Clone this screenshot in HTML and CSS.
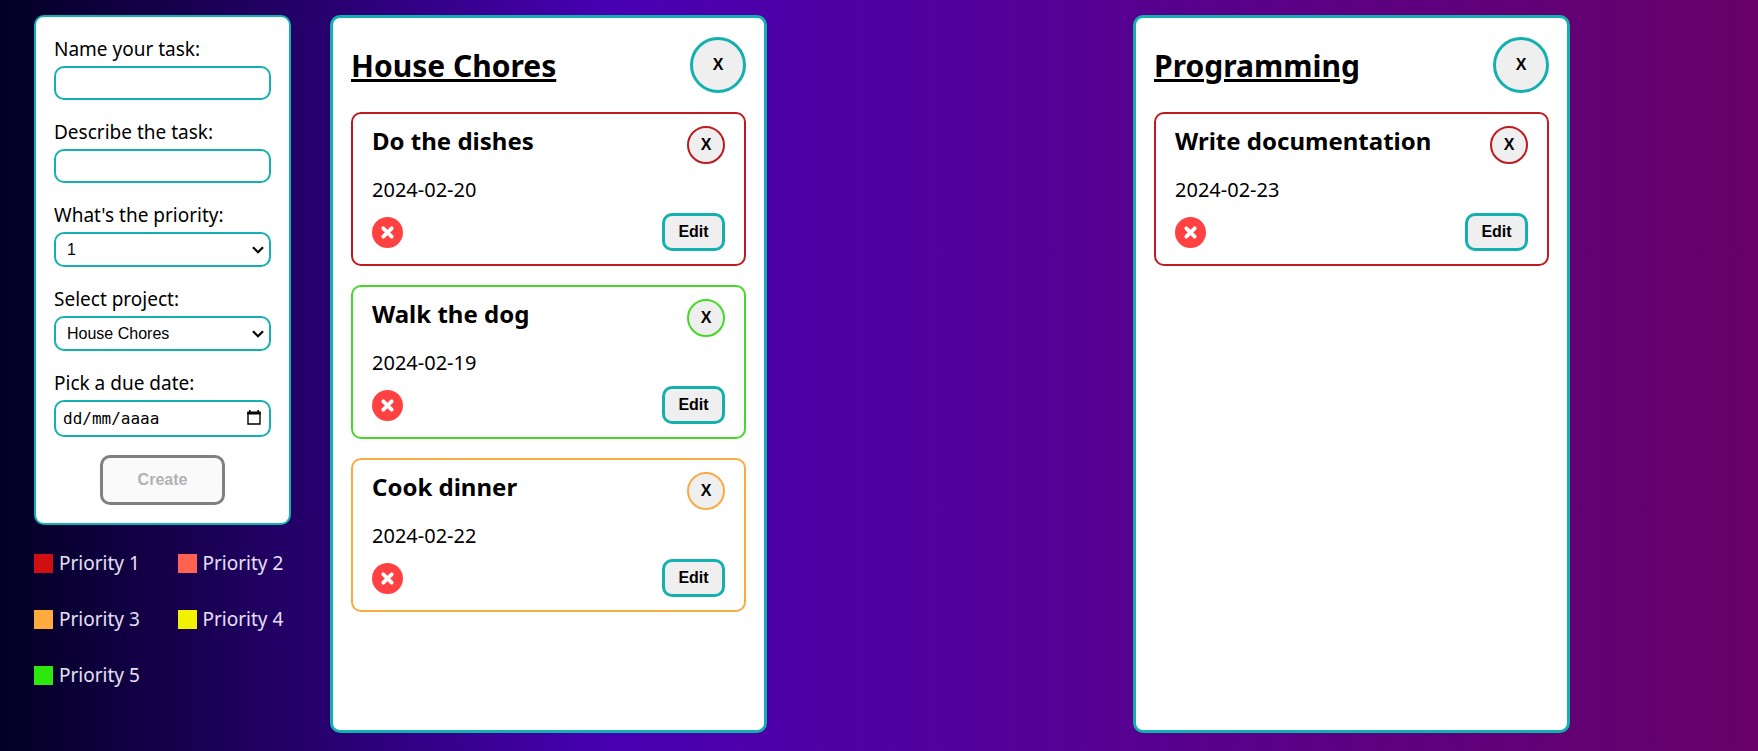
FILE: index.html
```html
<!DOCTYPE html>
<html lang="en">
<head>
<meta charset="utf-8">
<meta name="viewport" content="width=device-width, initial-scale=1">
<title>To-do list</title>
<link rel="stylesheet" href="styles.css">
</head>
<body>
<svg class="sprite" aria-hidden="true">
  <symbol id="not-done" viewBox="0 0 31 31">
    <circle cx="15.5" cy="15.5" r="15.5" fill="#ff4141"/>
    <path d="M11.3 11.3l8.4 8.4M19.7 11.3l-8.4 8.4" stroke="#fff" stroke-width="3.8" stroke-linecap="round"/>
  </symbol>
</svg>
<aside class="sidebar">
  <form class="task-form">
    <div class="field">
      <label for="task-name">Name your task:</label>
      <input id="task-name" class="control" type="text">
    </div>
    <div class="field">
      <label for="task-desc">Describe the task:</label>
      <input id="task-desc" class="control" type="text">
    </div>
    <div class="field">
      <label for="task-priority">What's the priority:</label>
      <div class="picker">
        <select id="task-priority" class="control control-select"><option>1</option><option>2</option><option>3</option><option>4</option><option>5</option></select>
        <svg class="chevron" viewBox="0 0 12 8" aria-hidden="true"><path d="M1 1.2l5 5 5-5" fill="none" stroke="#000" stroke-width="2.2"/></svg>
      </div>
    </div>
    <div class="field">
      <label for="task-project">Select project:</label>
      <div class="picker">
        <select id="task-project" class="control control-select"><option>House Chores</option><option>Programming</option></select>
        <svg class="chevron" viewBox="0 0 12 8" aria-hidden="true"><path d="M1 1.2l5 5 5-5" fill="none" stroke="#000" stroke-width="2.2"/></svg>
      </div>
    </div>
    <div class="field">
      <label for="task-date">Pick a due date:</label>
      <div class="picker">
        <input id="task-date" class="control control-date" type="text" placeholder="dd/mm/aaaa">
        <button class="calendar" type="button" aria-label="Open calendar"><svg viewBox="0 0 14 15"><path d="M1 3h12v11H1z" fill="none" stroke="#000" stroke-width="1.4"/><path d="M0.3 1.5h13.4V4.6H0.3zM2 0h1.6v2H2zM10.4 0h1.6v2h-1.6z"/></svg></button>
      </div>
    </div>
    <button class="create" type="submit" disabled>Create</button>
  </form>
  <ul class="legend">
    <li><span class="swatch p1"></span>Priority 1</li>
    <li><span class="swatch p2"></span>Priority 2</li>
    <li><span class="swatch p3"></span>Priority 3</li>
    <li><span class="swatch p4"></span>Priority 4</li>
    <li><span class="swatch p5"></span>Priority 5</li>
  </ul>
</aside>
<main class="board">
  <section class="project">
    <header class="project-head">
      <h1>House Chores</h1>
      <button class="round round-large" type="button">X</button>
    </header>
    <article class="task p1">
      <div class="row"><h2>Do the dishes</h2><button class="round" type="button">X</button></div>
      <p class="date">2024-02-20</p>
      <div class="row row-end"><svg class="status"><use href="#not-done"/></svg><button class="edit" type="button">Edit</button></div>
    </article>
    <article class="task p5">
      <div class="row"><h2>Walk the dog</h2><button class="round" type="button">X</button></div>
      <p class="date">2024-02-19</p>
      <div class="row row-end"><svg class="status"><use href="#not-done"/></svg><button class="edit" type="button">Edit</button></div>
    </article>
    <article class="task p3">
      <div class="row"><h2>Cook dinner</h2><button class="round" type="button">X</button></div>
      <p class="date">2024-02-22</p>
      <div class="row row-end"><svg class="status"><use href="#not-done"/></svg><button class="edit" type="button">Edit</button></div>
    </article>
  </section>
  <section class="project">
    <header class="project-head">
      <h1>Programming</h1>
      <button class="round round-large" type="button">X</button>
    </header>
    <article class="task p1">
      <div class="row"><h2>Write documentation</h2><button class="round" type="button">X</button></div>
      <p class="date">2024-02-23</p>
      <div class="row row-end"><svg class="status"><use href="#not-done"/></svg><button class="edit" type="button">Edit</button></div>
    </article>
  </section>
</main>
</body>
</html>
```
FILE: styles.css
```css
* {
  box-sizing: border-box;
}

body {
  --accent: #14b0b0;
  display: grid;
  grid-template-columns: 257px 1fr;
  gap: 39px;
  min-height: 100vh;
  margin: 0;
  padding: 15px 34px 18px;
  background: linear-gradient(90deg, #020024 0%, #4900b3 35%, #670067 100%);
  color: #000;
  font: 19px/28px "Noto Sans", sans-serif;
}

.sprite {
  position: absolute;
  width: 0;
  height: 0;
}

h1,
h2,
p {
  margin: 0;
}

button {
  padding: 0;
  color: #000;
  background: #efefef;
  font: bold 16px "Liberation Sans", Arial, sans-serif;
}

/* Task form */
.task-form {
  display: flex;
  flex-direction: column;
  gap: 18px;
  padding: 18px;
  border: 2px solid var(--accent);
  border-radius: 10px;
  background: #fff;
}

.field {
  display: flex;
  flex-direction: column;
  gap: 3px;
}

.control {
  display: block;
  width: 100%;
  height: 34px;
  padding: 0 7px;
  border: 2px solid var(--accent);
  border-radius: 10px;
  background: #fff;
  color: #000;
  font: 16px "Liberation Sans", Arial, sans-serif;
}

.control-select {
  height: 35px;
  padding: 0 11px;
  appearance: none;
}

.control-date {
  height: 37px;
  font-family: "DejaVu Sans Mono", monospace;
}

.control-date::placeholder {
  color: #000;
  opacity: 1;
}

.picker {
  position: relative;
}

.chevron {
  position: absolute;
  top: 14px;
  right: 7px;
  width: 12px;
  height: 8px;
  pointer-events: none;
}

.calendar {
  position: absolute;
  top: 10px;
  right: 10px;
  width: 14px;
  height: 15px;
  border: 0;
  background: none;
}

.calendar svg {
  display: block;
  width: 14px;
  height: 15px;
}

.create {
  align-self: center;
  width: 125px;
  height: 50px;
  border: 3px solid #808080;
  border-radius: 10px;
  background: #fafafa;
  color: #b2b2b2;
}

/* Priority legend */
.legend {
  display: grid;
  grid-template-columns: 1fr 1fr;
  column-gap: 30px;
  row-gap: 28px;
  margin: 24px 0 0;
  padding: 0;
  color: #e6e0f5;
  list-style: none;
}

.legend li {
  display: flex;
  align-items: center;
  gap: 6px;
  white-space: nowrap;
}

.swatch {
  flex: none;
  width: 19px;
  height: 19px;
  background: var(--priority);
}

.p1 { --priority: #d01010; --outline: #be1a20; }
.p2 { --priority: #ff6250; --outline: #ff6250; }
.p3 { --priority: #ffab3d; --outline: #f9ab42; }
.p4 { --priority: #f2f200; --outline: #f2f200; }
.p5 { --priority: #2de80c; --outline: #42da26; }

/* Project board */
.board {
  display: grid;
  grid-template-columns: repeat(2, minmax(0, 437px));
  justify-content: space-between;
  padding-right: 154px;
}

.project {
  display: flex;
  flex-direction: column;
  gap: 19px;
  padding: 19px 18px;
  border: 3px solid var(--accent);
  border-radius: 10px;
  background: #fff;
}

.project-head,
.row {
  display: flex;
  align-items: center;
  justify-content: space-between;
}

.task .row {
  align-items: flex-start;
}

.task .row-end {
  align-items: center;
}

h1 {
  padding-top: 2px;
  font-size: 30px;
  line-height: 40px;
  text-decoration: underline;
}

h2 {
  font-size: 24px;
  line-height: 30px;
}

.round {
  width: 38px;
  height: 38px;
  border: 2px solid var(--outline);
  border-radius: 50%;
}

.round-large {
  width: 56px;
  height: 56px;
  border: 3px solid var(--accent);
}

.task {
  display: flex;
  flex-direction: column;
  padding: 12px 19px 13px;
  border: 2px solid var(--outline);
  border-radius: 10px;
}

.date {
  padding: 12px 0 9px;
  font-size: 20px;
}

.status {
  width: 31px;
  height: 31px;
}

.edit {
  width: 63px;
  height: 38px;
  border: 3px solid var(--accent);
  border-radius: 10px;
}
```
